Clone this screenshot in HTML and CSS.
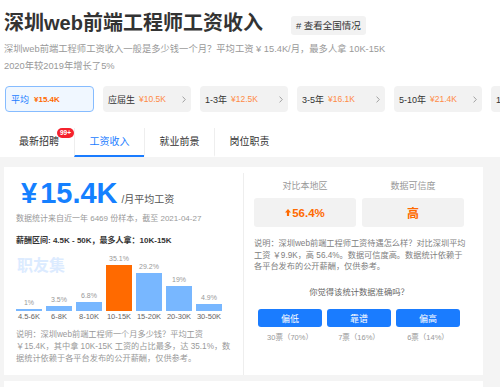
FILE: index.html
```html
<!DOCTYPE html>
<html lang="zh-CN">
<head>
    <meta charset="UTF-8">
    <meta name="viewport" content="width=device-width, initial-scale=1.0">
    <title>深圳web前端工程师工资收入</title>
    <link rel="stylesheet" href="styles.css">
</head>
<body>
    <div class="page-head">
        <div class="title-row">
            <h1 class="title">深圳web前端工程师工资收入</h1>
            <a class="tag" href="#"># 查看全国情况</a>
        </div>
        <p class="summary summary-first">深圳web前端工程师工资收入一般是多少钱一个月？平均工资 ¥ 15.4K/月，最多人拿 10K-15K</p>
        <p class="summary">2020年较2019年增长了5%</p>

        <!-- 按工作经验筛选 -->
        <div class="filters">
            <a class="filter active" href="#"><span class="filter-name">平均</span><span class="filter-price">¥15.4K</span></a>
            <a class="filter" href="#"><span class="filter-name">应届生</span><span class="filter-price">¥10.5K</span><svg class="chevron" viewBox="0 0 4 7"><path d="M0.6 0.6 L3.3 3.5 L0.6 6.4" /></svg></a>
            <a class="filter" href="#"><span class="filter-name">1-3年</span><span class="filter-price">¥12.5K</span><svg class="chevron" viewBox="0 0 4 7"><path d="M0.6 0.6 L3.3 3.5 L0.6 6.4" /></svg></a>
            <a class="filter" href="#"><span class="filter-name">3-5年</span><span class="filter-price">¥16.1K</span><svg class="chevron" viewBox="0 0 4 7"><path d="M0.6 0.6 L3.3 3.5 L0.6 6.4" /></svg></a>
            <a class="filter" href="#"><span class="filter-name">5-10年</span><span class="filter-price">¥21.4K</span><svg class="chevron" viewBox="0 0 4 7"><path d="M0.6 0.6 L3.3 3.5 L0.6 6.4" /></svg></a>
            <a class="filter" href="#"><span class="filter-name">10年以上</span><span class="filter-price">¥26.7K</span><svg class="chevron" viewBox="0 0 4 7"><path d="M0.6 0.6 L3.3 3.5 L0.6 6.4" /></svg></a>
        </div>

        <div class="tabs">
            <a class="tab" href="#"><span class="tab-label">最新招聘<em class="badge">99+</em></span></a>
            <a class="tab active" href="#">工资收入</a>
            <a class="tab" href="#">就业前景</a>
            <a class="tab" href="#">岗位职责</a>
        </div>
    </div>

    <div class="content">
        <div class="card salary-card">
            <div class="salary-left">
                <div class="avg">
                    <span class="avg-num"><span class="avg-cur">¥</span>15.4K</span>
                    <span class="avg-unit">/月平均工资</span>
                </div>
                <p class="sample">数据统计来自近一年 6469 份样本，截至 2021-04-27</p>
                <p class="range">薪酬区间: 4.5K - 50K，最多人拿：10K-15K</p>

                <!-- 工资分布 -->
                <div class="chart">
                    <span class="watermark">职友集</span>
                    <div class="bar-col"><span class="bar-pct">1%</span><span class="bar" style="height: 2px"></span></div>
                    <div class="bar-col"><span class="bar-pct">3.5%</span><span class="bar" style="height: 5px"></span></div>
                    <div class="bar-col"><span class="bar-pct">6.8%</span><span class="bar" style="height: 9px"></span></div>
                    <div class="bar-col"><span class="bar-pct">35.1%</span><span class="bar peak" style="height: 46px"></span></div>
                    <div class="bar-col"><span class="bar-pct">29.2%</span><span class="bar" style="height: 38px"></span></div>
                    <div class="bar-col"><span class="bar-pct">19%</span><span class="bar" style="height: 25px"></span></div>
                    <div class="bar-col"><span class="bar-pct">4.9%</span><span class="bar" style="height: 7px"></span></div>
                </div>
                <div class="chart-axis">
                    <span>4.5-6K</span>
                    <span>6-8K</span>
                    <span>8-10K</span>
                    <span>10-15K</span>
                    <span>15-20K</span>
                    <span>20-30K</span>
                    <span>30-50K</span>
                </div>
                <p class="note">说明：深圳web前端工程师一个月多少钱？平均工资 ￥15.4K，其中拿 10K-15K 工资的占比最多，达 35.1%，数据统计依赖于各平台发布的公开薪酬，仅供参考。</p>
            </div>

            <div class="salary-right">
                <div class="compare">
                    <div class="compare-item">
                        <div class="compare-label">对比本地区</div>
                        <div class="compare-box">
                            <svg class="up" viewBox="0 0 6 7"><path d="M3 0 L6 3.4 H4.1 V7 H1.9 V3.4 H0 Z" /></svg>56.4%
                        </div>
                    </div>
                    <div class="compare-item">
                        <div class="compare-label">数据可信度</div>
                        <div class="compare-box level">高</div>
                    </div>
                </div>
                <p class="note note-right">说明：深圳web前端工程师工资待遇怎么样？对比深圳平均工资 ￥9.9K，高 56.4%。数据可信度高。数据统计依赖于各平台发布的公开薪酬，仅供参考。</p>
                <p class="vote-q">你觉得该统计数据准确吗？</p>
                <div class="votes">
                    <div class="vote"><button>偏低</button><span>30票（70%）</span></div>
                    <div class="vote"><button>靠谱</button><span>7票（16%）</span></div>
                    <div class="vote"><button>偏高</button><span>6票（14%）</span></div>
                </div>
            </div>
        </div>
        <div class="card next-card"></div>
    </div>
</body>
</html>
```

FILE: styles.css
```css
* {
    box-sizing: border-box;
}
body {
    margin: 0;
    font-family: "Liberation Sans", "Noto Sans CJK SC", sans-serif;
    background: #f4f4f4;
    color: #333;
    overflow: hidden;
}
p {
    margin: 0;
}
a {
    color: inherit;
    text-decoration: none;
}
.page-head {
    background: #fff;
    padding: 9px 0 0 4px;
}
.title-row {
    display: flex;
    align-items: center;
    height: 28px;
}
.title {
    margin: 0;
    font-size: 20px;
    line-height: 28px;
    font-weight: bold;
    color: #333;
}
.tag {
    margin: 4px 0 0 28px;
    height: 19px;
    line-height: 19px;
    padding: 0 5px;
    background: #f2f2f2;
    border-radius: 3px;
    font-size: 9.5px;
    color: #333;
}
.summary {
    font-size: 9.3px;
    line-height: 17px;
    color: #999;
}
.summary-first {
    margin-top: 4px;
}
/* 筛选卡片 */
.filters {
    display: flex;
    gap: 9px;
    margin-top: 11px;
    padding-left: 1px;
    overflow: hidden;
}
.filter {
    flex: 0 0 88px;
    height: 26px;
    display: flex;
    align-items: center;
    padding: 0 5px;
    background: #f2f2f2;
    border-radius: 4px;
    font-size: 9px;
    color: #333;
    white-space: nowrap;
}
.filter.active {
    flex-basis: 89px;
    background: #f0f7ff;
    border: 1px solid #86bcff;
    color: #1a7cff;
}
.filter-price {
    margin-left: 4px;
    font-size: 8.5px;
    color: #ff8a45;
}
.filter.active .filter-price {
    margin-left: 5px;
    font-size: 8px;
    font-weight: bold;
    color: #ff6a00;
}
.chevron {
    margin-left: auto;
    width: 4px;
    height: 7px;
    fill: none;
    stroke: #999;
    stroke-width: 0.9;
}
/* 标签页 */
.tabs {
    display: flex;
    margin-top: 16px;
}
.tab {
    width: 70px;
    height: 29px;
    line-height: 27px;
    text-align: center;
    font-size: 10px;
    color: #333;
    border-bottom: 2px solid transparent;
}
.tab + .tab {
    border-left: 1px solid #eee;
}
.tab.active {
    color: #1a7cff;
    border-bottom-color: #1a7cff;
}
.tab-label {
    position: relative;
}
.badge {
    position: absolute;
    top: -8px;
    right: -15px;
    height: 10px;
    line-height: 10px;
    padding: 0 3px;
    border-radius: 5px;
    background: #f5222d;
    color: #fff;
    font-size: 6.5px;
    font-style: normal;
    font-weight: bold;
}
/* 主体 */
.content {
    padding: 10px 17px 0 4px;
}
.card {
    background: #fff;
}
.salary-card {
    display: flex;
    padding-top: 6px;
}
.salary-left {
    width: 240px;
    padding: 5px 9px 10px 12px;
    border-right: 1px solid #eee;
}
.avg {
    display: flex;
    align-items: baseline;
    height: 30px;
    line-height: 30px;
    padding-left: 5px;
}
.avg-num {
    font-size: 29px;
    font-weight: bold;
    color: #1580ff;
}
.avg-cur {
    margin-right: 3px;
}
.avg-unit {
    margin-left: 4px;
    font-size: 10px;
    color: #555;
}
.sample {
    margin-top: 4px;
    font-size: 8px;
    line-height: 14px;
    color: #999;
}
.range {
    margin-top: 8px;
    font-size: 8px;
    line-height: 14px;
    font-weight: bold;
    color: #333;
}
.chart {
    position: relative;
    display: flex;
    align-items: flex-end;
    gap: 4px;
    height: 63px;
}
.watermark {
    position: absolute;
    left: 1px;
    top: 8px;
    font-size: 16px;
    line-height: 20px;
    font-weight: bold;
    color: #dcebff;
}
.bar-col {
    width: 26px;
    display: flex;
    flex-direction: column;
    align-items: center;
}
.bar-pct {
    font-size: 7px;
    line-height: 9px;
    color: #999;
    margin-bottom: 2px;
}
.bar {
    width: 100%;
    background: #78b7ff;
}
.bar.peak {
    background: #ff6a00;
}
.chart-axis {
    display: flex;
    gap: 4px;
}
.chart-axis span {
    width: 26px;
    text-align: center;
    font-size: 7.5px;
    line-height: 12px;
    color: #666;
    white-space: nowrap;
}
.note {
    margin-top: 6px;
    font-size: 8.2px;
    line-height: 12px;
    color: #999;
}
.salary-right {
    flex: 1;
    padding: 6px 19px 0 10px;
}
.compare {
    display: flex;
    gap: 6px;
}
.compare-item {
    flex: 1;
}
.compare-label {
    text-align: center;
    font-size: 9px;
    line-height: 14px;
    color: #999;
}
.compare-box {
    margin-top: 5px;
    height: 29px;
    display: flex;
    align-items: center;
    justify-content: center;
    background: #f2f2f2;
    border-radius: 3px;
    color: #ff6a00;
    font-size: 11.5px;
    font-weight: bold;
}
.compare-box .up {
    width: 6px;
    height: 7px;
    margin-right: 1px;
    fill: #ff6a00;
}
.compare-box.level {
    font-size: 12px;
}
.note-right {
    margin-top: 11px;
    margin-right: -4px;
    line-height: 11.5px;
    color: #808080;
}
.vote-q {
    margin-top: 12.5px;
    text-align: center;
    font-size: 8.3px;
    line-height: 14px;
    color: #666;
}
.votes {
    display: flex;
    justify-content: center;
    gap: 5px;
    margin-top: 10px;
}
.vote {
    width: 64px;
    display: flex;
    flex-direction: column;
    align-items: center;
}
.vote button {
    width: 100%;
    height: 18px;
    padding: 0;
    border: none;
    border-radius: 3px;
    background: #1a7cff;
    color: #fff;
    font-family: inherit;
    font-size: 9px;
    cursor: pointer;
}
.vote span {
    margin-top: 5px;
    font-size: 7.5px;
    line-height: 12px;
    color: #999;
}
.next-card {
    margin-top: 6px;
    height: 60px;
}
```
